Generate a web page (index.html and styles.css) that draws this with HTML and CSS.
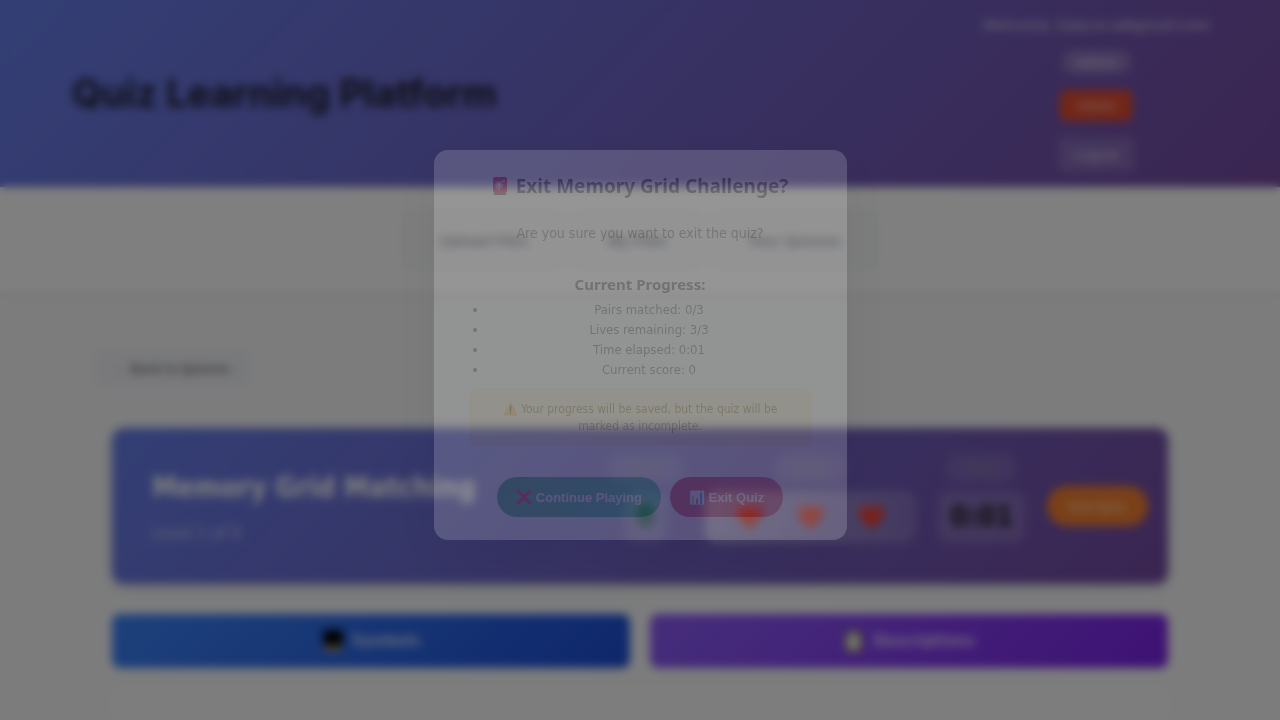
FILE: index.html
```html
<!DOCTYPE html>
<html lang="en">
<head>
<meta charset="utf-8">
<title>Quiz Learning Platform</title>
<link rel="stylesheet" href="styles.css">
</head>
<body>
<header class="top">
  <h1 class="brand">Quiz Learning Platform</h1>
  <div class="user">
    <span class="welcome">Welcome, katy.m.a@gmail.com</span>
    <span class="role">Admin</span>
    <button class="admin">Admin</button>
    <button class="logout">Logout</button>
  </div>
</header>
<nav class="nav">
  <button class="tab">Upload Files</button>
  <button class="tab">My Files</button>
  <button class="tab">Your Quizzes</button>
</nav>
<main class="main">
  <button class="back">← Back to Quizzes</button>
  <section class="game">
    <div class="game-title">
      <h2>Memory Grid Matching</h2>
      <p>Level 1 of 5</p>
    </div>
    <div class="stats">
      <div class="stat"><span class="label">Score</span><span class="value score">0</span></div>
      <div class="stat"><span class="label">Lives</span><span class="value hearts"><i>❤️</i><i>❤️</i><i>❤️</i></span></div>
      <div class="stat"><span class="label">Time</span><span class="value">0:01</span></div>
      <button class="exit">Exit Quiz</button>
    </div>
  </section>
  <div class="columns">
    <h3 class="col symbols"><svg class="glyph" viewBox="0 0 22 22" aria-hidden="true"><rect x="1" y="0" width="20" height="15" rx="3" fill="#000"/><rect x="2" y="15" width="18" height="6" rx="2" fill="#a98a5c"/></svg>Symbols</h3>
    <h3 class="col descriptions"><svg class="glyph" viewBox="0 0 22 22" aria-hidden="true"><rect x="2" y="1" width="17" height="21" rx="2" fill="#8a7048"/><rect x="4" y="4" width="13" height="16" fill="#e6ecdc"/><rect x="7" y="0" width="7" height="4" fill="#889"/></svg>Descriptions</h3>
  </div>
  <section class="board"></section>
</main>
<div class="overlay">
  <div class="dialog" role="dialog" aria-labelledby="dialog-title">
    <h3 class="dialog-title" id="dialog-title"><svg class="siren" viewBox="0 0 16 20" aria-hidden="true"><rect x="1" y="1" width="14" height="16" rx="2" fill="#e0102f"/><path d="M2 18h12" stroke="#444" stroke-width="2"/><path d="M7 5v9M3 9h8M4 6l6 6M4 12l6-6M10 5h3" stroke="#fff" stroke-width="1"/></svg>Exit Memory Grid Challenge?</h3>
    <p class="question">Are you sure you want to exit the quiz?</p>
    <h4 class="progress-title">Current Progress:</h4>
    <ul class="progress">
      <li>Pairs matched: 0/3</li>
      <li>Lives remaining: 3/3</li>
      <li>Time elapsed: 0:01</li>
      <li>Current score: 0</li>
    </ul>
    <p class="warning">⚠️ Your progress will be saved, but the quiz will be marked as incomplete.</p>
    <div class="actions">
      <button class="action stay"><svg class="mark" viewBox="0 0 16 16" aria-hidden="true"><path d="M1 1l14 14M15 1L1 15" stroke="#ff0030" stroke-width="3"/></svg>Continue Playing</button>
      <button class="action leave">📊 Exit Quiz</button>
    </div>
  </div>
</div>
</body>
</html>
```
FILE: styles.css
```css
* { box-sizing: border-box; margin: 0; }
body { display: flex; flex-direction: column; height: 100vh; font-family: "DejaVu Sans Condensed", "DejaVu Sans", sans-serif; background: #f8f9fa; color: #333; }
button { border: 0; font-family: "Liberation Sans", sans-serif; font-weight: 600; color: #fff; }
.top { display: flex; flex-shrink: 0; justify-content: space-between; align-items: center; min-height: 187px; padding: 8px 70px 10px 72px; background: linear-gradient(135deg, #667eea, #764ba2); }
.brand { font-family: Inter, sans-serif; font-size: 38px; color: #1e1e2e; }
.user { display: flex; flex-direction: column; align-items: center; gap: 16px; color: #ffffff99; font-family: "Noto Sans", sans-serif; font-size: 15px; font-weight: 600; line-height: 20px; }
.role { background: #ffffff33; border-radius: 12px; padding: 2px 14px; font-size: 13px; }
.admin { background: #e74c2c; border-radius: 5px; padding: 8px 16px; color: #fff9; font-size: 13px; }
.logout { background: #ffffff26; border-radius: 5px; padding: 10px 16px; color: #fff9; }
.nav { display: flex; flex-shrink: 0; justify-content: center; gap: 8px; padding: 24px; background: #fff; border-bottom: 1px solid #e5e5e5; box-shadow: 0 2px 4px #0001; }
.tab { height: 58px; padding: 0 34px; background: #fafbfc; border: 2px solid #edf0f4; border-radius: 8px; color: #889; font-size: 15px; }
.main { display: flex; flex: 1; flex-direction: column; min-height: 0; padding: 54px 112px 0; }
.back { align-self: flex-start; height: 40px; margin-left: -18px; padding: 0 20px; background: #f2f3f7; border-radius: 8px; color: #778; font-size: 13px; }
.game { display: flex; flex-shrink: 0; justify-content: space-between; align-items: center; min-height: 156px; margin-top: 40px; padding: 0 20px 0 40px; border-radius: 12px; background: linear-gradient(135deg, #667eea, #764ba2); box-shadow: 0 4px 12px #0002; color: #fff; }
.game-title h2 { font-size: 28px; line-height: 38px; }
.game-title p { margin-top: 16px; font-size: 17px; opacity: .6; }
.stats { display: flex; align-items: center; gap: 22px; }
.stat { display: flex; flex-direction: column; align-items: center; gap: 8px; padding-bottom: 16px; }
.label { padding: 5px 20px; border-radius: 14px; background: #ffffff1a; font-size: 14px; line-height: 20px; color: #889; }
.value { padding: 8px 12px; border-radius: 12px; background: #ffffff26; color: #222; font-size: 28px; font-weight: 700; line-height: 36px; }
.score { color: #0b5a34; }
.hearts { display: flex; gap: 32px; padding: 8px 30px; background: linear-gradient(90deg, #ffffff66, #ffffff26); font-size: 23px; }
.hearts i { font-style: normal; }
.exit { height: 40px; padding: 0 22px; border-radius: 20px; background: #f58030; color: #ffd0a0; }
.columns { display: grid; flex-shrink: 0; grid-template-columns: 1fr 1fr; gap: 20px; margin-top: 30px; }
.col { display: flex; align-items: center; justify-content: center; gap: 8px; padding: 14px; border-radius: 8px; color: #fffb; font-size: 16px; line-height: 26px; }
.glyph { width: 22px; height: 22px; }
.symbols { background: linear-gradient(135deg, #3b82f6, #1d4ed8); }
.descriptions { background: linear-gradient(135deg, #8b5cf6, #7c22e8); }
.board { flex: 1; margin-top: 20px; background: #fbfbfb; border-radius: 10px 10px 0 0; }
.overlay { position: fixed; inset: 0; display: flex; align-items: center; justify-content: center; padding: 0 20px 30px; background: rgba(0, 0, 0, .5); backdrop-filter: blur(5px); }
.dialog { width: 100%; max-width: 413px; padding: 22px 36px 23px; border-radius: 14px; background: #fff; box-shadow: 0 18px 54px rgba(0, 0, 0, .3); opacity: .17; text-align: center; font-size: 14px; }
.dialog-title { display: flex; align-items: center; justify-content: center; gap: 8px; font-family: "Noto Sans", sans-serif; font-size: 19px; line-height: 28px; }
.siren { width: 16px; height: 20px; }
.question { margin-top: 22px; color: #555; line-height: 22px; }
.progress-title { margin-top: 29px; font-family: "Noto Sans", sans-serif; font-size: 15px; line-height: 22px; }
.progress { margin-top: 5px; padding: 0 0 0 18px; color: #444; font-size: 13px; line-height: 20px; }
.warning { margin-top: 9px; padding: 11px 18px 9px; border: 1px solid #ffeaa7; border-radius: 6px; background: #fff3cd; color: #856404; font-size: 12px; line-height: 17px; }
.actions { display: flex; justify-content: center; gap: 9px; margin-top: 32px; }
.action { display: flex; align-items: center; gap: 4px; height: 40px; padding: 0 19px; border-radius: 20px; font-size: 13px; }
.mark { width: 16px; height: 16px; }
.stay { background: linear-gradient(135deg, #28a745, #20c997); }
.leave { background: linear-gradient(135deg, #dc3545, #e0506a); }
```
